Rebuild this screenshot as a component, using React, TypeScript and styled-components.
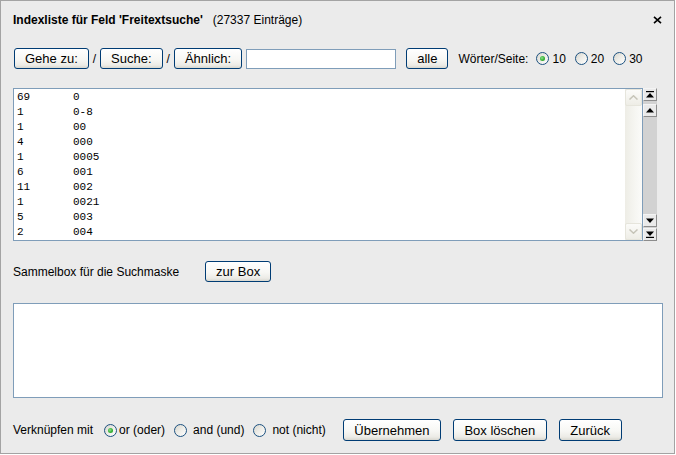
import styled, { createGlobalStyle } from 'styled-components';

const GlobalStyle = createGlobalStyle`
  html, body {
    margin: 0;
    padding: 0;
    background: #ffffff;
  }
  body {
    font-family: 'Liberation Sans', Arial, sans-serif;
    font-size: 12px;
    color: #000;
  }
`;

const entries: [string, string][] = [
  ['69', '0'],
  ['1', '0-8'],
  ['1', '00'],
  ['4', '000'],
  ['1', '0005'],
  ['6', '001'],
  ['11', '002'],
  ['1', '0021'],
  ['5', '003'],
  ['2', '004'],
];

export default function App() {
  return (
    <>
      <GlobalStyle />
      <Dialog>
        <Header>
          <Title>Indexliste für Feld 'Freitextsuche'</Title>
          <Count>(27337 Einträge)</Count>
          <Close aria-label="Schließen">
            <svg width="9" height="8" viewBox="0 0 9 8">
              <path d="M1 0.8 L8 7.2 M8 0.8 L1 7.2" stroke="#000" strokeWidth="1.6" />
            </svg>
          </Close>
        </Header>

        <Toolbar>
          <Button $first>Gehe zu:</Button>
          <Slash>/</Slash>
          <Button>Suche:</Button>
          <Slash>/</Slash>
          <Button>Ähnlich:</Button>
          <SearchInput type="text" />
          <Button $gap={6}>alle</Button>
          <Label $gap={6}>Wörter/Seite:</Label>
          <RadioGroup $gap={4}>
            <RadioItem>
              <Radio $checked />
              <span>10</span>
            </RadioItem>
            <RadioItem>
              <Radio />
              <span>20</span>
            </RadioItem>
            <RadioItem>
              <Radio />
              <span>30</span>
            </RadioItem>
          </RadioGroup>
        </Toolbar>

        <ListRow>
          <ListBox>
            <Rows>
              {entries.map(([count, word], i) => (
                <Row key={i}>
                  <span>{count}</span>
                  <span>{word}</span>
                </Row>
              ))}
            </Rows>
            <InnerScroll>
              <InnerArrow>
                <svg width="9" height="5" viewBox="0 0 9 5">
                  <polyline points="0.5,4.5 4.5,0.8 8.5,4.5" fill="none" stroke="#c6c4b8" strokeWidth="1.5" />
                </svg>
              </InnerArrow>
              <InnerArrow>
                <svg width="9" height="5" viewBox="0 0 9 5">
                  <polyline points="0.5,0.5 4.5,4.2 8.5,0.5" fill="none" stroke="#c6c4b8" strokeWidth="1.5" />
                </svg>
              </InnerArrow>
            </InnerScroll>
          </ListBox>
          <PageScroll>
            <PageButton>
              <svg width="8" height="7" viewBox="0 0 8 7">
                <rect x="0" y="0" width="8" height="1.2" fill="#000" />
                <polygon points="0,6.5 4,2 8,6.5" fill="#000" />
              </svg>
            </PageButton>
            <PageButton $gap={3}>
              <svg width="8" height="5" viewBox="0 0 8 5">
                <polygon points="0,4.5 4,0 8,4.5" fill="#000" />
              </svg>
            </PageButton>
            <Track />
            <PageButton>
              <svg width="8" height="5" viewBox="0 0 8 5">
                <polygon points="0,0.5 4,5 8,0.5" fill="#000" />
              </svg>
            </PageButton>
            <PageButton $gap={1}>
              <svg width="8" height="7" viewBox="0 0 8 7">
                <polygon points="0,0.5 4,5 8,0.5" fill="#000" />
                <rect x="0" y="5.8" width="8" height="1.2" fill="#000" />
              </svg>
            </PageButton>
          </PageScroll>
        </ListRow>

        <CollectRow>
          <Label>Sammelbox für die Suchmaske</Label>
          <Button $gap={22}>zur Box</Button>
        </CollectRow>

        <CollectBox />

        <Footer>
          <Label>Verknüpfen mit</Label>
          <RadioGroup $gap={11}>
            <RadioItem $tight>
              <Radio $checked />
              <span>or (oder)</span>
            </RadioItem>
            <RadioItem $lead={3}>
              <Radio />
              <span>and (und)</span>
            </RadioItem>
            <RadioItem $lead={3}>
              <Radio />
              <span>not (nicht)</span>
            </RadioItem>
          </RadioGroup>
          <FooterButtons>
            <Button $tall>Übernehmen</Button>
            <Button $tall>Box löschen</Button>
            <Button $tall>Zurück</Button>
          </FooterButtons>
        </Footer>
      </Dialog>
    </>
  );
}

const Dialog = styled.div`
  box-sizing: border-box;
  width: 675px;
  height: 454px;
  border: 1px solid #a3a3a3;
  background: #ebebeb;
  padding: 7px 11px 0 12px;
  display: flex;
  flex-direction: column;
`;

const Header = styled.div`
  height: 24px;
  display: flex;
  align-items: center;
`;

const Title = styled.span`
  font-weight: 700;
  font-size: 12px;
`;

const Count = styled.span`
  margin-left: 10px;
  font-size: 12px;
`;

const Close = styled.span`
  margin-left: auto;
  margin-right: 1px;
  display: flex;
  align-items: center;
`;

const Toolbar = styled.div`
  margin-top: 16px;
  height: 21px;
  display: flex;
  align-items: center;
  gap: 4px;
`;

const Button = styled.button<{ $first?: boolean; $gap?: number; $tall?: boolean }>`
  box-sizing: border-box;
  height: ${(p) => (p.$tall ? 22 : 21)}px;
  margin: 0 0 0 ${(p) => (p.$first ? 1 : p.$gap ?? 0)}px;
  padding: 0 ${(p) => (p.$tall ? 10.5 : 10)}px;
  border: 1px solid #003c74;
  border-radius: 3px;
  background: linear-gradient(180deg, #ffffff 0%, #f7f7f4 55%, #ecebe6 85%, #d8d7cf 100%);
  box-shadow: inset 0 1px 0 #ffffff;
  font-family: 'Liberation Sans', Arial, sans-serif;
  font-size: 13px;
  color: #000;
  line-height: 1;
  white-space: nowrap;
  cursor: pointer;
`;

const Slash = styled.span`
  font-size: 12px;
`;

const SearchInput = styled.input`
  box-sizing: border-box;
  width: 150px;
  height: 20px;
  margin: 0;
  padding: 1px 3px;
  border: 1px solid #7f9db9;
  background: #fff;
  font-family: 'Liberation Sans', Arial, sans-serif;
  font-size: 12px;
`;

const Label = styled.span<{ $gap?: number }>`
  margin-left: ${(p) => p.$gap ?? 0}px;
  font-size: 12px;
  white-space: nowrap;
`;

const RadioGroup = styled.div<{ $gap?: number }>`
  margin-left: ${(p) => p.$gap ?? 0}px;
  display: flex;
  align-items: center;
  gap: 9px;
`;

const RadioItem = styled.label<{ $tight?: boolean; $lead?: number }>`
  display: flex;
  align-items: center;
  gap: ${(p) => (p.$tight ? 2 : 3 + (p.$lead ?? 0))}px;
  font-size: 12px;
  white-space: nowrap;
`;

const Radio = styled.span<{ $checked?: boolean }>`
  position: relative;
  box-sizing: border-box;
  width: 13px;
  height: 13px;
  border-radius: 50%;
  border: 1px solid #1c5180;
  background: linear-gradient(135deg, #d6d5cd 0%, #ecebe6 45%, #ffffff 100%);
  flex: none;

  &::after {
    content: '';
    display: ${(p) => (p.$checked ? 'block' : 'none')};
    position: absolute;
    left: 3px;
    top: 3px;
    width: 5px;
    height: 5px;
    border-radius: 50%;
    background: radial-gradient(circle at 40% 40%, #8fe08f 0%, #3bb53b 50%, #1f8f1f 100%);
  }
`;

const ListRow = styled.div`
  margin-top: 19px;
  width: 644px;
  height: 153px;
  display: flex;
`;

const ListBox = styled.div`
  box-sizing: border-box;
  width: 630px;
  height: 153px;
  border: 1px solid #7f9db9;
  background: #fff;
  display: flex;
`;

const Rows = styled.div`
  flex: 1;
  padding: 1px 0 0 3px;
`;

const Row = styled.div`
  display: grid;
  grid-template-columns: 56px 1fr;
  height: 15px;
  line-height: 15px;
  font-family: 'Liberation Mono', 'Courier New', monospace;
  font-size: 11px;
`;

const InnerScroll = styled.div`
  width: 17px;
  display: flex;
  flex-direction: column;
  justify-content: space-between;
  background: linear-gradient(90deg, #eeede6 0%, #f6f6f2 60%, #fbfbf9 100%);
`;

const InnerArrow = styled.div`
  box-sizing: border-box;
  width: 17px;
  height: 17px;
  border: 1px solid #e6e5dc;
  border-radius: 2px;
  background: linear-gradient(180deg, #fbfbf9 0%, #eeede6 100%);
  display: flex;
  align-items: center;
  justify-content: center;
`;

const PageScroll = styled.div`
  width: 14px;
  display: flex;
  flex-direction: column;
  background: #d2d2d2;
`;

const PageButton = styled.div<{ $gap?: number }>`
  box-sizing: border-box;
  width: 14px;
  height: 13px;
  margin-top: ${(p) => p.$gap ?? 0}px;
  border: 1px solid;
  border-color: #f4f4f4 #8c8c8c #8c8c8c #f4f4f4;
  background: #eaeaea;
  display: flex;
  align-items: center;
  justify-content: center;
`;

const Track = styled.div`
  flex: 1;
  background: #d2d2d2;
`;

const CollectRow = styled.div`
  margin-top: 20px;
  height: 21px;
  display: flex;
  align-items: center;
  gap: 4px;
`;

const CollectBox = styled.div`
  box-sizing: border-box;
  margin-top: 21px;
  width: 650px;
  height: 95px;
  border: 1px solid #7f9db9;
  background: #fff;
`;

const Footer = styled.div`
  margin-top: 21px;
  height: 22px;
  display: flex;
  align-items: center;
`;

const FooterButtons = styled.div`
  margin-left: 17px;
  display: flex;
  gap: 12px;
`;
